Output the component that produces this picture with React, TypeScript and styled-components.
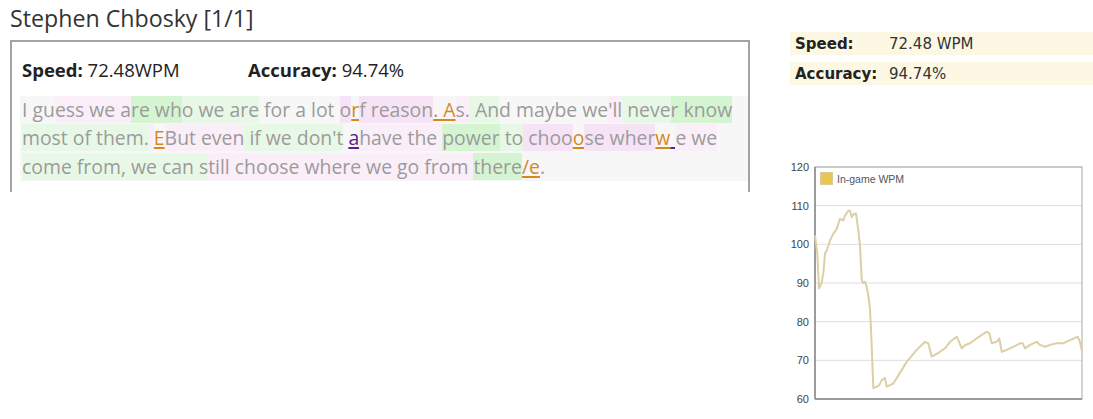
import styled, { createGlobalStyle } from "styled-components"

type Kind = "" | "g1" | "g2" | "g3" | "p1" | "p2" | "err" | "miss"

const segments: [string, Kind][] = [
  ["I gu", ""],
  ["ess we a", "p1"],
  ["re wh", "g2"],
  ["o we", "g1"],
  [" are", "g1"],
  [" for a lot ", ""],
  ["o", "p2"],
  ["r", "err"],
  ["f reason", "p2"],
  [". A", "err"],
  ["s.", "p1"],
  [" An", "g1"],
  ["d maybe we", ""],
  ["'ll", "p1"],
  [" neve", "g1"],
  ["r know", "g2"],
  [" ", ""],
  ["most of them.", "g1"],
  [" ", "p1"],
  ["E", "err"],
  ["But even", "p1"],
  [" if we don't", "g1"],
  [" ", ""],
  ["a", "miss"],
  ["have the ", "p1"],
  ["power", "g2"],
  [" to", "g1"],
  [" choo", "p2"],
  ["o", "err"],
  ["se wher", "p2"],
  ["w", "err"],
  [" ", "miss"],
  ["e we", "p1"],
  [" ", ""],
  ["come from,", "g1"],
  [" we can s", "g1"],
  ["till choose where we go from ", "p1"],
  ["there", "g2"],
  ["/e", "err"],
  [".", ""],
]

const kindBg: Record<Kind, string> = {
  "": "transparent",
  g1: "#e8f8e6",
  g2: "#d5f4d2",
  g3: "#c2efbe",
  p1: "#faeef9",
  p2: "#f6e3f5",
  err: "transparent",
  miss: "transparent",
}

const kindColor: Record<Kind, string> = {
  "": "#9b9b9b",
  g1: "#9b9b9b",
  g2: "#9b9b9b",
  g3: "#9b9b9b",
  p1: "#9b9b9b",
  p2: "#9b9b9b",
  err: "#d9861e",
  miss: "#5b1f8a",
}

// chart samples: [page x, wpm]
const wpm: [number, number][] = [
  [815, 102.3], [817.3, 97.6], [819, 88.6], [821.7, 90], [823.5, 93], [825, 97.6],
  [826.7, 98.4], [830, 101], [833.3, 102.7], [836.7, 104], [840, 106.6], [843.3, 106.2],
  [845, 107.4], [848.3, 108.7], [850, 108.7], [851.7, 107], [854, 107.9], [856, 108],
  [858.3, 103.6], [860, 99.7], [861.7, 91], [862.7, 90], [865, 90.3], [866.7, 89],
  [868.3, 86.8], [870, 83.4], [871.7, 74], [873.3, 62.8], [876.7, 63.2], [879.3, 63.6],
  [881.7, 64.9], [885, 65.4], [886.7, 63.2], [890, 63.6], [893.3, 64], [896.7, 65.4],
  [906.7, 69.6], [916.7, 72.7], [925, 74.8], [928.3, 74.4], [931.7, 71], [935, 71.4],
  [940, 72.2], [945, 73.1], [950, 74.8], [956.7, 76.1], [958.3, 75.2], [961.7, 73.1],
  [965, 73.9], [970, 74.4], [976.7, 75.7], [986.7, 77.4], [989.3, 77], [991.7, 74.4],
  [996.7, 74.8], [999.3, 75.7], [1001.7, 72.2], [1006.7, 72.7], [1013.3, 73.5],
  [1020, 74.4], [1022.7, 74.4], [1025, 73.1], [1030, 74], [1036.7, 74.8], [1040, 74],
  [1045, 73.5], [1050, 74], [1056.7, 74.4], [1063.3, 74.4], [1070, 75.2], [1077.7, 76.1],
  [1080, 74.8], [1082.3, 71.8],
]

const PLOT_LEFT = 25
const PLOT_RIGHT = 292
const PLOT_TOP = 8
const PLOT_BOTTOM = 240
const yFor = (v: number) => PLOT_TOP + ((120 - v) / 60) * (PLOT_BOTTOM - PLOT_TOP)

const GlobalStyle = createGlobalStyle`
  body {
    margin: 0;
    background: #fff;
  }
`

const App = () => {
  const ticks = [120, 110, 100, 90, 80, 70, 60]
  const path = wpm
    .map(([x, v], i) => `${i === 0 ? "M" : "L"}${(x - 790).toFixed(1)} ${yFor(v).toFixed(1)}`)
    .join(" ")

  return (
    <>
      <GlobalStyle />
      <Page>
        <LeftColumn>
          <Title>Stephen Chbosky [1/1]</Title>
          <ResultBox>
            <StatsRow>
              <Stat>
                <b>Speed:</b> 72.48WPM
              </Stat>
              <Stat>
                <b>Accuracy:</b> 94.74%
              </Stat>
            </StatsRow>
            <Passage>
              {segments.map(([text, kind], i) => (
                <Chunk key={i} $kind={kind}>
                  {text}
                </Chunk>
              ))}
            </Passage>
          </ResultBox>
        </LeftColumn>

        <RightColumn>
          <SummaryTable>
            <tbody>
              <SummaryRow>
                <th>Speed:</th>
                <td>72.48 WPM</td>
              </SummaryRow>
              <SummaryRow>
                <th>Accuracy:</th>
                <td>94.74%</td>
              </SummaryRow>
            </tbody>
          </SummaryTable>

          <Chart width={303} height={250} viewBox="0 0 303 250">
            {ticks.map((t) => (
              <g key={t}>
                <line
                  x1={PLOT_LEFT}
                  x2={PLOT_RIGHT}
                  y1={yFor(t)}
                  y2={yFor(t)}
                  stroke="#dedede"
                  strokeWidth={1}
                />
                <text
                  x={19}
                  y={yFor(t) + 4}
                  textAnchor="end"
                  fontSize={11}
                  fill="#444"
                  fontFamily="'Liberation Sans', Arial, sans-serif"
                >
                  {t}
                </text>
              </g>
            ))}
            <rect
              x={PLOT_LEFT}
              y={PLOT_TOP}
              width={PLOT_RIGHT - PLOT_LEFT}
              height={PLOT_BOTTOM - PLOT_TOP}
              fill="none"
              stroke="#a8a8a8"
              strokeWidth={1}
            />
            <line x1={PLOT_LEFT} x2={PLOT_LEFT} y1={PLOT_TOP} y2={PLOT_BOTTOM} stroke="#8a8a8a" strokeWidth={1.5} />
            <line x1={PLOT_LEFT} x2={PLOT_RIGHT} y1={PLOT_BOTTOM} y2={PLOT_BOTTOM} stroke="#8a8a8a" strokeWidth={1.5} />
            <path d={path} fill="none" stroke="#dccfa5" strokeWidth={2} strokeLinejoin="round" />
            <rect x={30.5} y={13.5} width={12} height={12} fill="#e9c552" stroke="#d8cc9a" strokeWidth={1} />
            <text
              x={47}
              y={23.5}
              fontSize={10.5}
              fill="#555"
              fontFamily="'Liberation Sans', Arial, sans-serif"
            >
              In-game WPM
            </text>
          </Chart>
        </RightColumn>
      </Page>
    </>
  )
}

const Page = styled.div`
  display: flex;
  align-items: flex-start;
  padding: 5px 0 0 10px;
`

const LeftColumn = styled.div`
  width: 740px;
  flex-shrink: 0;
`

const Title = styled.h1`
  margin: 0 0 8px;
  height: 27px;
  font-family: "Open Sans", "Noto Sans", sans-serif;
  font-size: 23.2px;
  line-height: 27px;
  font-weight: 400;
  color: #333;
`

const ResultBox = styled.div`
  border: 2px solid #a3a3a3;
  border-bottom: none;
  padding: 0 0 11px 8px;
`

const StatsRow = styled.div`
  display: flex;
  align-items: center;
  height: 54px;
  padding-left: 2px;
  font-family: "Open Sans", "Noto Sans", sans-serif;
  font-size: 18.5px;
  color: #222;
`

const Stat = styled.div`
  width: 226px;

  b {
    font-weight: 700;
  }
`

const Passage = styled.div`
  background: #f7f7f7;
  padding-left: 2px;
  font-family: "Open Sans", "Noto Sans", sans-serif;
  font-size: 19.4px;
  line-height: 28.3px;
  color: #9b9b9b;
`

const Chunk = styled.span<{ $kind: Kind }>`
  background: ${(p) => kindBg[p.$kind]};
  color: ${(p) => kindColor[p.$kind]};
  text-decoration: ${(p) => (p.$kind === "err" || p.$kind === "miss" ? "underline" : "none")};
  text-decoration-thickness: 2px;
  text-underline-offset: 2px;
`

const RightColumn = styled.div`
  margin-left: 40px;
  flex: 1;
  padding-top: 27px;
`

const SummaryTable = styled.table`
  width: 100%;
  border-collapse: separate;
  border-spacing: 0 7px;
  margin-top: -7px;
  font-family: "DejaVu Sans", Verdana, sans-serif;
  font-size: 15px;
  color: #333;
`

const SummaryRow = styled.tr`
  background: #fdf8e3;
  height: 23px;

  th {
    width: 94px;
    padding: 0 0 0 5px;
    text-align: left;
    font-weight: 700;
    color: #222;
  }

  td {
    padding: 0;
  }
`

const Chart = styled.svg`
  display: block;
  margin-top: 67px;
`

export default App
